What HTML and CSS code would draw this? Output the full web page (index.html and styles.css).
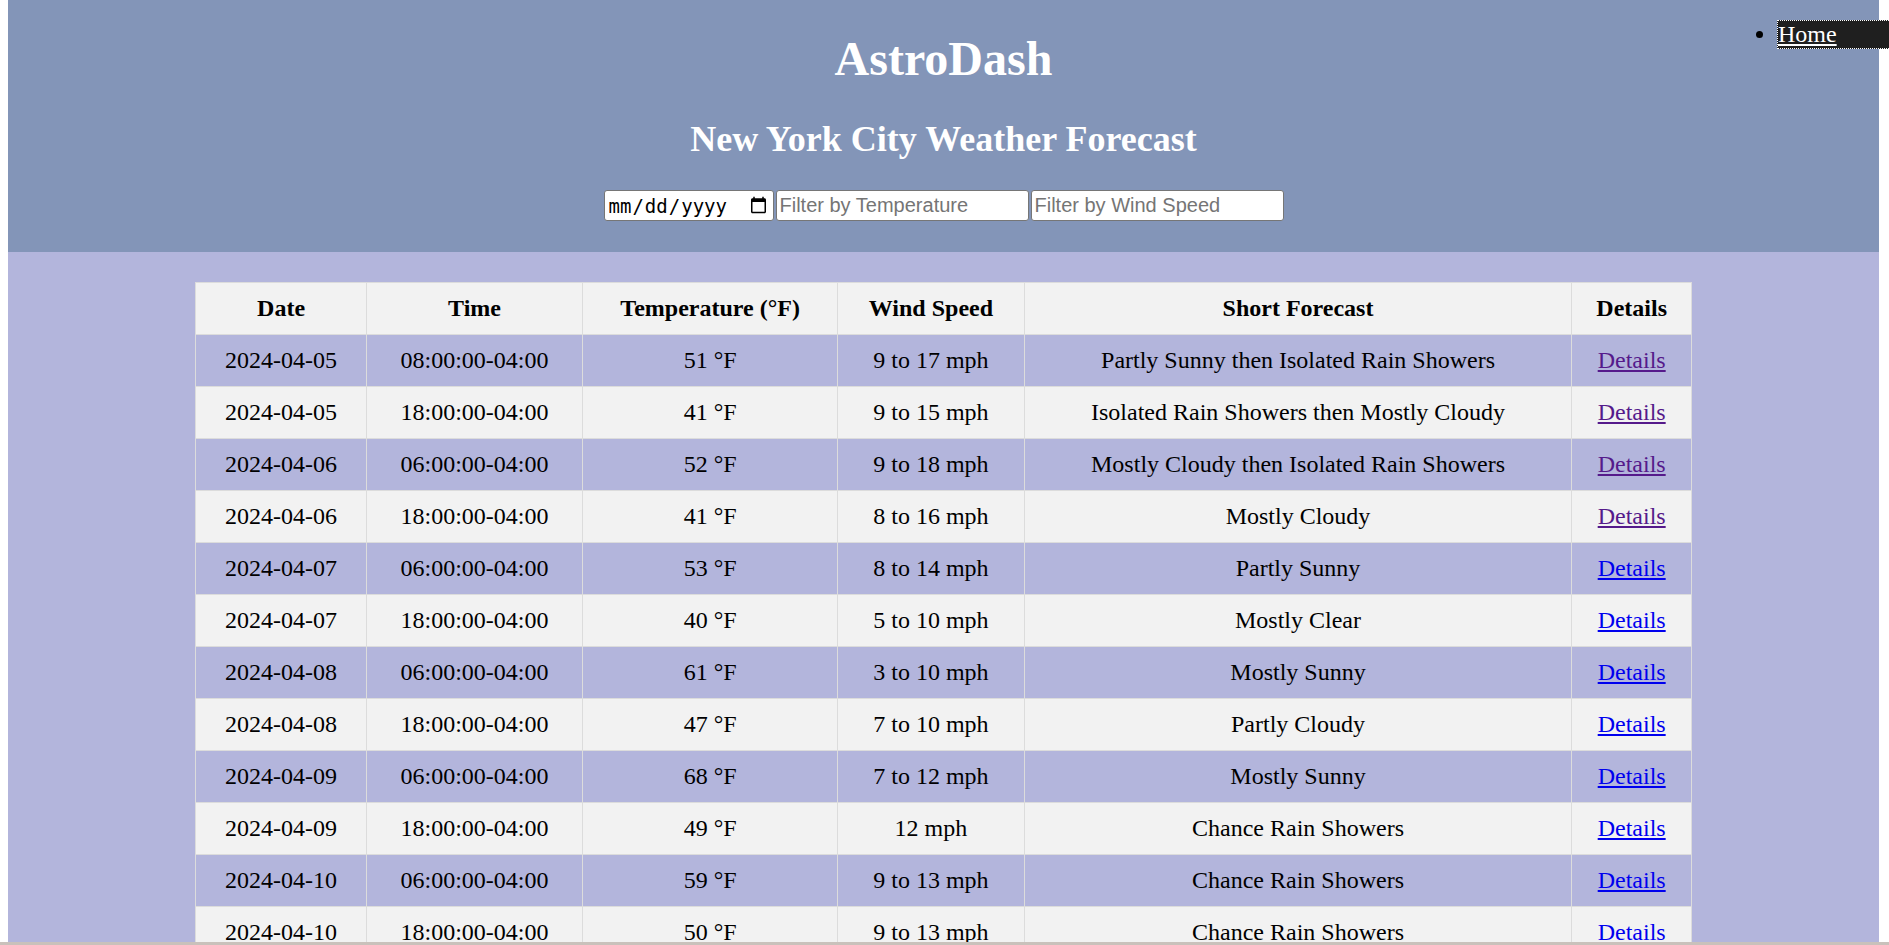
FILE: index.html
```html
<!DOCTYPE html>
<html lang="en">
<head>
<meta charset="utf-8">
<title>AstroDash</title>
<link rel="stylesheet" href="styles.css">
</head>
<body>
<header class="site-header">
  <h1 class="title">AstroDash</h1>
  <h2 class="subtitle">New York City Weather Forecast</h2>
  <div class="filters">
    <input type="date" class="filter filter-date">
    <input type="text" class="filter filter-text" placeholder="Filter by Temperature">
    <input type="text" class="filter filter-text" placeholder="Filter by Wind Speed">
  </div>
</header>
<nav class="top-nav">
  <ul class="nav-list">
    <li class="nav-item"><a class="nav-link" href="#">Home</a></li>
  </ul>
</nav>
<main class="content">
  <table class="forecast">
    <thead>
      <tr><th>Date</th><th>Time</th><th>Temperature (°F)</th><th>Wind Speed</th><th>Short Forecast</th><th>Details</th></tr>
    </thead>
    <tbody>
      <tr><td>2024-04-05</td><td>08:00:00-04:00</td><td>51 °F</td><td>9 to 17 mph</td><td>Partly Sunny then Isolated Rain Showers</td><td><a class="details visited" href="#">Details</a></td></tr>
      <tr><td>2024-04-05</td><td>18:00:00-04:00</td><td>41 °F</td><td>9 to 15 mph</td><td>Isolated Rain Showers then Mostly Cloudy</td><td><a class="details visited" href="#">Details</a></td></tr>
      <tr><td>2024-04-06</td><td>06:00:00-04:00</td><td>52 °F</td><td>9 to 18 mph</td><td>Mostly Cloudy then Isolated Rain Showers</td><td><a class="details visited" href="#">Details</a></td></tr>
      <tr><td>2024-04-06</td><td>18:00:00-04:00</td><td>41 °F</td><td>8 to 16 mph</td><td>Mostly Cloudy</td><td><a class="details visited" href="#">Details</a></td></tr>
      <tr><td>2024-04-07</td><td>06:00:00-04:00</td><td>53 °F</td><td>8 to 14 mph</td><td>Partly Sunny</td><td><a class="details" href="#">Details</a></td></tr>
      <tr><td>2024-04-07</td><td>18:00:00-04:00</td><td>40 °F</td><td>5 to 10 mph</td><td>Mostly Clear</td><td><a class="details" href="#">Details</a></td></tr>
      <tr><td>2024-04-08</td><td>06:00:00-04:00</td><td>61 °F</td><td>3 to 10 mph</td><td>Mostly Sunny</td><td><a class="details" href="#">Details</a></td></tr>
      <tr><td>2024-04-08</td><td>18:00:00-04:00</td><td>47 °F</td><td>7 to 10 mph</td><td>Partly Cloudy</td><td><a class="details" href="#">Details</a></td></tr>
      <tr><td>2024-04-09</td><td>06:00:00-04:00</td><td>68 °F</td><td>7 to 12 mph</td><td>Mostly Sunny</td><td><a class="details" href="#">Details</a></td></tr>
      <tr><td>2024-04-09</td><td>18:00:00-04:00</td><td>49 °F</td><td>12 mph</td><td>Chance Rain Showers</td><td><a class="details" href="#">Details</a></td></tr>
      <tr><td>2024-04-10</td><td>06:00:00-04:00</td><td>59 °F</td><td>9 to 13 mph</td><td>Chance Rain Showers</td><td><a class="details" href="#">Details</a></td></tr>
      <tr><td>2024-04-10</td><td>18:00:00-04:00</td><td>50 °F</td><td>9 to 13 mph</td><td>Chance Rain Showers</td><td><a class="details" href="#">Details</a></td></tr>
      <tr><td>2024-04-11</td><td>06:00:00-04:00</td><td>62 °F</td><td>8 to 12 mph</td><td>Mostly Sunny</td><td><a class="details" href="#">Details</a></td></tr>
      <tr><td>2024-04-11</td><td>18:00:00-04:00</td><td>48 °F</td><td>6 to 10 mph</td><td>Partly Cloudy</td><td><a class="details" href="#">Details</a></td></tr>
    </tbody>
  </table>
</main>
<div class="bottom-bar"></div>
</body>
</html>
```
FILE: styles.css
```css
html, body {
  background: #ffffff;
}
body {
  margin: 0 10px 0 8px;
  font-family: "Liberation Serif", "Times New Roman", serif;
  font-size: 24px;
  color: #000;
}
.site-header {
  display: flow-root;
  background: #8395b8;
  color: #ffffff;
  text-align: center;
  padding-bottom: 31px;
}
.title {
  font-size: 48px;
  font-weight: bold;
  margin: 31px 0 32px;
}
.subtitle {
  font-size: 36px;
  font-weight: bold;
  margin: 30px 0;
}
.filters {
  display: flex;
  justify-content: center;
  gap: 2px;
}
.filter {
  box-sizing: border-box;
  height: 31px;
  margin: 0;
  border: 1px solid #767676;
  border-radius: 3px;
  background: #ffffff;
  padding: 1px 3px;
  font-family: "Liberation Sans", Arial, sans-serif;
  font-size: 20px;
  color: #000;
}
.filter::placeholder {
  color: #757575;
}
.filter-date {
  width: 170px;
  font-family: "DejaVu Sans Mono", monospace;
  font-size: 19px;
}
.filter-text {
  width: 253px;
}
.top-nav {
  position: absolute;
  top: 0;
  right: 0;
}
.nav-list {
  margin: 20px 0;
  padding-left: 40px;
  list-style: disc;
  font-size: 24px;
}
.nav-link {
  display: block;
  box-sizing: border-box;
  width: 112px;
  height: 29px;
  background: #1f1f1f;
  color: #ffffff;
  text-decoration: underline;
  border: 1px dotted #ffffff;
  border-right: none;
}
.content {
  display: flow-root;
  background: #b3b5dc;
  min-height: 700px;
}
.forecast {
  width: 80%;
  margin: 30px auto 0;
  border-collapse: collapse;
}
.forecast th,
.forecast td {
  border: 1px solid #dcdcdc;
  padding: 12px;
  text-align: center;
  font-size: 24px;
}
.forecast th {
  background: #f2f2f2;
  font-weight: bold;
}
.forecast tbody tr:nth-child(even) {
  background: #f2f2f2;
}
.details {
  color: #0000ee;
  text-decoration: underline;
}
.details.visited {
  color: #551a8b;
}
.bottom-bar {
  position: fixed;
  left: 0;
  right: 0;
  bottom: 0;
  height: 3px;
  background: #c9c1bb;
}
```
